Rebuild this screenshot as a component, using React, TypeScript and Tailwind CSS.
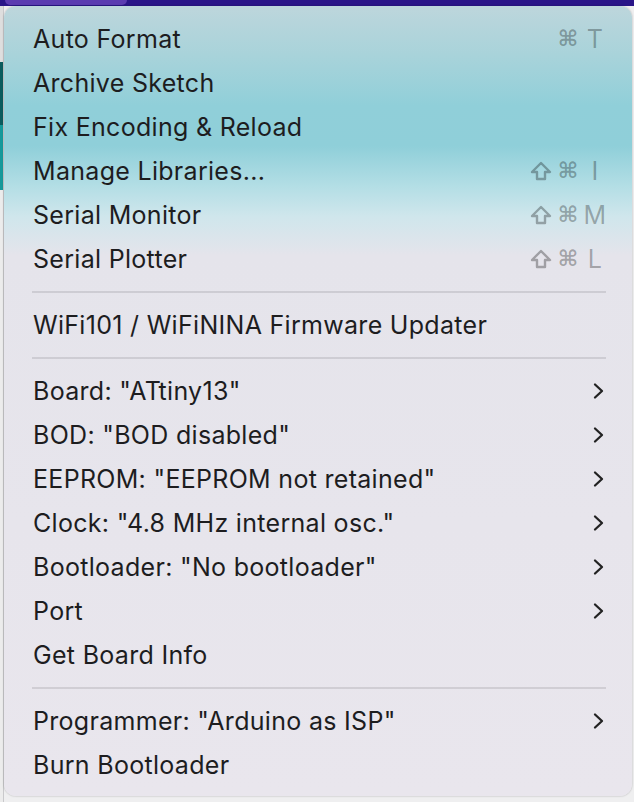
import React from "react";

type Item =
  | { kind: "item"; label: string; keys?: string[]; sub?: boolean }
  | { kind: "sep" };

const items: Item[] = [
  { kind: "item", label: "Auto Format", keys: ["", "⌘", "T"] },
  { kind: "item", label: "Archive Sketch" },
  { kind: "item", label: "Fix Encoding & Reload" },
  { kind: "item", label: "Manage Libraries...", keys: ["⇧", "⌘", "I"] },
  { kind: "item", label: "Serial Monitor", keys: ["⇧", "⌘", "M"] },
  { kind: "item", label: "Serial Plotter", keys: ["⇧", "⌘", "L"] },
  { kind: "sep" },
  { kind: "item", label: "WiFi101 / WiFiNINA Firmware Updater" },
  { kind: "sep" },
  { kind: "item", label: 'Board: "ATtiny13"', sub: true },
  { kind: "item", label: 'BOD: "BOD disabled"', sub: true },
  { kind: "item", label: 'EEPROM: "EEPROM not retained"', sub: true },
  { kind: "item", label: 'Clock: "4.8 MHz internal osc."', sub: true },
  { kind: "item", label: 'Bootloader: "No bootloader"', sub: true },
  { kind: "item", label: "Port", sub: true },
  { kind: "item", label: "Get Board Info" },
  { kind: "sep" },
  { kind: "item", label: 'Programmer: "Arduino as ISP"', sub: true },
  { kind: "item", label: "Burn Bootloader" },
];

function Chevron() {
  return (
    <svg width="14" height="18" viewBox="0 0 14 18" className="mr-[1px]">
      <polyline points="4,2.5 11,9 4,15.5" fill="none" stroke="#222" strokeWidth="2.3" strokeLinecap="round" strokeLinejoin="round" />
    </svg>
  );
}

function ShiftKey() {
  return (
    <svg width="22" height="20" viewBox="0 0 22 20">
      <path d="M11 2 L20 11 L15 11 L15 18 L7 18 L7 11 L2 11 Z" fill="none" stroke="currentColor" strokeWidth="2.4" strokeLinejoin="round" />
    </svg>
  );
}

function Keys({ keys }: { keys: string[] }) {
  return (
    <div className="flex items-center gap-[5px] text-black/30 font-['Inter',sans-serif] text-[25px]">
      {keys.map((k, i) => (
        <span key={i} className="w-[22px] flex justify-center">
          {k === "⇧" ? (
            <ShiftKey />
          ) : k === "⌘" ? (
            <span className="font-['DejaVu_Sans',sans-serif] text-[22px] font-bold">{k}</span>
          ) : (
            k
          )}
        </span>
      ))}
    </div>
  );
}

export default function App() {
  return (
    <div className="w-[634px] h-[802px] bg-[#efeff0] overflow-hidden flex flex-col">
      <div className="h-[6px] bg-[#2a1588] flex shrink-0">
        <div className="w-[122px] ml-[5px] h-[5px] bg-[#5b3bb0] rounded-br-[6px] rounded-bl-[6px]" />
      </div>
      <div className="flex flex-1">
        <div className="w-[4px] flex flex-col shrink-0 border-r border-[#c9c9cb]">
          <div className="h-[56px] bg-[#dedede]" />
          <div className="h-[63px] bg-[#0b5c5e]" />
          <div className="h-[65px] bg-[#15999b]" />
          <div className="flex-1 bg-[#ececec]" />
        </div>
        <div className="w-[628px] h-[790px] rounded-[12px] shadow-[0_0_2px_rgba(0,0,0,0.3)] bg-[linear-gradient(180deg,#bdd6dc_0px,#a8d3da_50px,#90cfd9_100px,#8fcfd9_140px,#b3dee5_180px,#cfe6ec_210px,#e5e4eb_250px,#e9e6ed_100%)] pt-[11px] pb-[10px] pl-[28px] pr-[26px] font-['Inter',sans-serif] text-[#1d1d1f]">
          {items.map((it, i) =>
            it.kind === "sep" ? (
              <div key={i} className="h-[22px] flex items-center">
                <div className="h-[2px] w-full bg-black/10" />
              </div>
            ) : (
              <div key={i} className="h-[44px] flex items-center justify-between text-[25px] tracking-[0.3px] leading-[44px] pl-[1px]">
                <span>{it.label}</span>
                {it.keys && <Keys keys={it.keys} />}
                {it.sub && <Chevron />}
              </div>
            )
          )}
        </div>
      </div>
    </div>
  );
}
